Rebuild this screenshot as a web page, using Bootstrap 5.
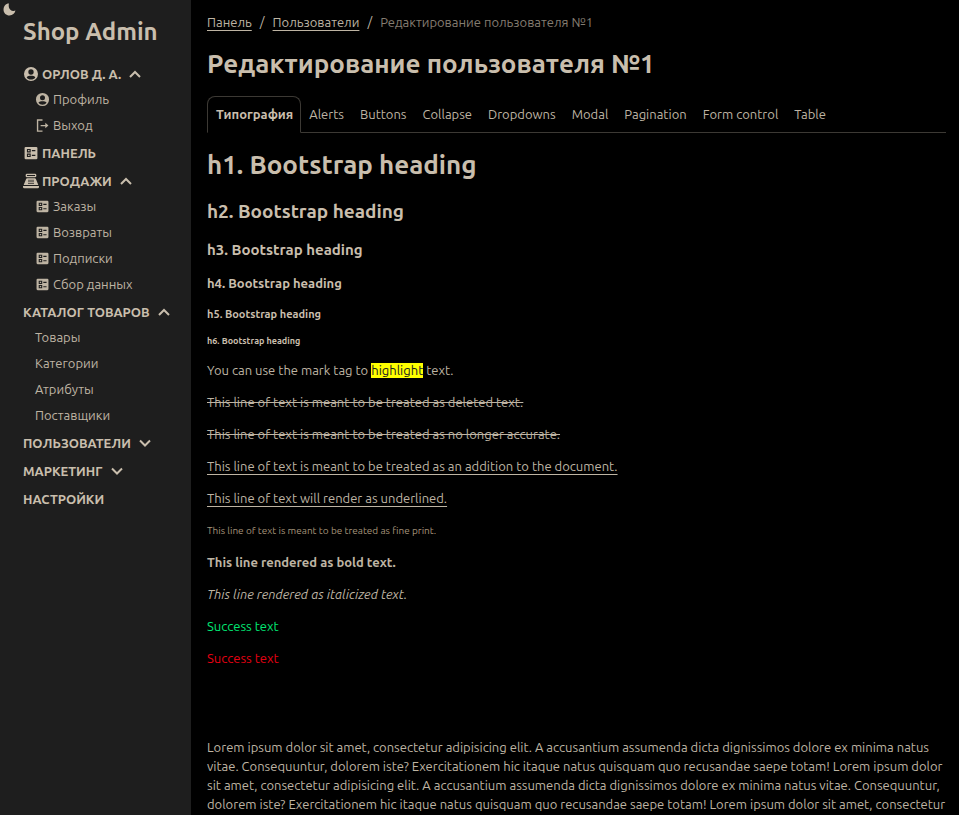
<!DOCTYPE html>
<html lang="ru">
<head>
<meta charset="utf-8">
<meta name="viewport" content="width=device-width, initial-scale=1">
<title>Shop Admin</title>
<link href="https://cdn.jsdelivr.net/npm/bootstrap@5.3.0/dist/css/bootstrap.min.css" rel="stylesheet">
<style>
:root { --ink: #c9bead; --ink-soft: #beb4a3; --line: #3c3934; }
body { font-family: Ubuntu, "Noto Sans", sans-serif; font-size: 13px; line-height: 19px; color: var(--ink-soft); background: #000; }
a, a:hover { color: inherit; }
svg { fill: currentColor; flex: none; }
h1, h2, h3, h4, h5, h6 { color: var(--ink); font-weight: 600; }
h1 { font-size: 26px; line-height: 31px; }
h2 { font-size: 19px; line-height: 23px; margin-bottom: 18px; }
h3 { font-size: 15px; line-height: 18px; margin-bottom: 16px; }
h4 { font-size: 13px; line-height: 16px; margin-bottom: 17px; }
h5 { font-size: 11px; line-height: 13px; margin-bottom: 15px; }
h6 { font-size: 9px; line-height: 10px; margin-bottom: 15px; }
p { margin-bottom: 13px; }
mark { background: #ff0; color: #222; padding: 0; line-height: 15px; display: inline-block; }
ins, u, .crumbs a { text-underline-offset: 3px; }
.page-title { margin-bottom: 17px; }
.sidebar { flex: 0 0 191px; background: #1e1e1e; padding: 16px 0 16px 23px; }
.brand { font-size: 24px; line-height: 31px; font-weight: 600; color: var(--ink); margin-bottom: 15px; }
.theme-switch { top: 3px; left: 3px; color: var(--ink); line-height: 0; }
.side-group { margin-bottom: 4px; }
.side-group.is-open { margin-bottom: 3px; }
.side-head { font-size: 13px; line-height: 24px; font-weight: 600; color: var(--ink); text-align: left; }
.side-head svg + span, .side-list svg + span { margin-left: 3px; }
.side-head .chev { margin-left: 6px; }
.side-list { padding-left: 12px; }
.side-list a { line-height: 26px; }
.main-area { padding: 13px 13px 0 16px; min-width: 0; }
.crumbs { --bs-breadcrumb-item-padding-x: 8px; --bs-breadcrumb-divider-color: var(--ink-soft); --bs-breadcrumb-item-active-color: #857d71; margin-bottom: 16px; }
.nav-tabs { --bs-nav-tabs-border-color: var(--line); --bs-nav-tabs-border-radius: 8px; --bs-nav-tabs-link-active-bg: #000; --bs-nav-tabs-link-active-color: var(--ink); --bs-nav-tabs-link-active-border-color: var(--line) var(--line) #000; --bs-nav-tabs-link-hover-border-color: transparent; --bs-nav-link-color: var(--ink-soft); --bs-nav-link-hover-color: var(--ink); --bs-nav-link-padding-x: 7px; --bs-nav-link-padding-y: 8px; margin-bottom: 16px; }
.nav-tabs .nav-link { font-size: 13px; }
.nav-tabs .nav-link.active { font-weight: 700; padding-left: 8px; }
.fine-print { font-size: 10px; color: #a5947a; }
.text-ok { color: #00e673; }
.text-bad { color: #e60012; }
.filler { padding-top: 57px; }
</style>
<script defer src="https://cdn.jsdelivr.net/npm/bootstrap@5.3.0/dist/js/bootstrap.bundle.min.js"></script>
</head>
<body>
<svg class="d-none" aria-hidden="true">
  <symbol id="i-user" viewBox="0 0 24 24"><path fill-rule="evenodd" d="M12 1.500a10.500 10.500 0 1 0 0 21 10.500 10.500 0 0 0 0-21zM12 5a4 4 0 1 1 0 8 4 4 0 0 1 0-8zM5.500 17.200C6.500 15.300 9.500 14.800 12 14.800s5.500.5 6.500 2.400C17 19.200 14.700 20.300 12 20.300s-5-1.100-6.500-3.100z"/></symbol>
  <symbol id="i-exit" viewBox="0 0 24 24"><path d="M3 2h9v2.200H5.200v15.600H12V22H3zM16.500 7.500l5 4.500-5 4.500V13H9v-2h7.500z"/></symbol>
  <symbol id="i-ballot" viewBox="0 0 24 24"><path fill-rule="evenodd" d="M13.500 9h6V7h-6zM13.500 17h6v-2h-6zM21 1.500a2 2 0 0 1 2 2v17a2 2 0 0 1-2 2H3a2 2 0 0 1-2-2v-17a2 2 0 0 1 2-2zM5 11h6.500V5H5zm0 8h6.500v-6H5zM7 6.800h2.500v2.400H7zm0 8h2.500v2.400H7z"/></symbol>
  <symbol id="i-till" viewBox="0 0 24 24"><path fill-rule="evenodd" d="M6 1h12a2 2 0 0 1 2 2v1.500a2 2 0 0 1-2 2H6a2 2 0 0 1-2-2V3a2 2 0 0 1 2-2zm0 2v1.500h12V3zM6.300 8h11.400a2 2 0 0 1 1.800 1.200L23 18H1l3.500-8.800A2 2 0 0 1 6.300 8zM8 10v1.500h2V10zm3 0v1.500h2V10zm3 0v1.500h2V10zM8 12.500V14h2v-1.500zm3 0V14h2v-1.500zm3 0V14h2v-1.500zM8 15v1.500h2V15zm3 0v1.500h2V15zm3 0v1.500h2V15zM0 19.500h24V21a2 2 0 0 1-2 2H2a2 2 0 0 1-2-2z"/></symbol>
  <symbol id="i-up" viewBox="0 0 16 16"><path d="M3 11l5-5 5 5" fill="none" stroke="currentColor" stroke-width="2"/></symbol>
  <symbol id="i-down" viewBox="0 0 16 16"><path d="M3 5.500l5 5 5-5" fill="none" stroke="currentColor" stroke-width="2"/></symbol>
  <symbol id="i-moon" viewBox="0 0 24 24"><path d="M11 1C5 1 1 6 1 12.300 1 18.500 6 23 12 23c5.500 0 10-3.500 11-9-2 1-4 1.200-6 .5-5-1.500-7.500-7-6-13.500z"/></symbol>
</svg>
<div class="d-flex min-vh-100 position-relative">
  <aside class="sidebar">
    <button type="button" class="theme-switch btn btn-link p-0 border-0 position-absolute" aria-label="Тема"><svg width="13" height="13"><use href="#i-moon"/></svg></button>
    <div class="brand">Shop Admin</div>
    <nav>
      <div class="side-group is-open">
        <button type="button" class="side-head btn p-0 border-0 d-flex align-items-center" data-bs-toggle="collapse" data-bs-target="#m-user" aria-expanded="true"><svg width="16" height="16"><use href="#i-user"/></svg><span>ОРЛОВ Д. А.</span><svg class="chev" width="16" height="16"><use href="#i-up"/></svg></button>
        <ul class="side-list list-unstyled mb-0 collapse show" id="m-user">
          <li><a class="d-flex align-items-center text-decoration-none" href="#"><svg width="15" height="15"><use href="#i-user"/></svg><span>Профиль</span></a></li>
          <li><a class="d-flex align-items-center text-decoration-none" href="#"><svg width="15" height="15"><use href="#i-exit"/></svg><span>Выход</span></a></li>
        </ul>
      </div>
      <div class="side-group">
        <a class="side-head d-flex align-items-center text-decoration-none" href="#"><svg width="16" height="14"><use href="#i-ballot"/></svg><span>ПАНЕЛЬ</span></a>
      </div>
      <div class="side-group is-open">
        <button type="button" class="side-head btn p-0 border-0 d-flex align-items-center" data-bs-toggle="collapse" data-bs-target="#m-sales" aria-expanded="true"><svg width="16" height="16"><use href="#i-till"/></svg><span>ПРОДАЖИ</span><svg class="chev" width="16" height="16"><use href="#i-up"/></svg></button>
        <ul class="side-list list-unstyled mb-0 collapse show" id="m-sales">
          <li><a class="d-flex align-items-center text-decoration-none" href="#"><svg width="15" height="13"><use href="#i-ballot"/></svg><span>Заказы</span></a></li>
          <li><a class="d-flex align-items-center text-decoration-none" href="#"><svg width="15" height="13"><use href="#i-ballot"/></svg><span>Возвраты</span></a></li>
          <li><a class="d-flex align-items-center text-decoration-none" href="#"><svg width="15" height="13"><use href="#i-ballot"/></svg><span>Подписки</span></a></li>
          <li><a class="d-flex align-items-center text-decoration-none" href="#"><svg width="15" height="13"><use href="#i-ballot"/></svg><span>Сбор данных</span></a></li>
        </ul>
      </div>
      <div class="side-group is-open">
        <button type="button" class="side-head btn p-0 border-0 d-flex align-items-center" data-bs-toggle="collapse" data-bs-target="#m-catalog" aria-expanded="true"><span>КАТАЛОГ ТОВАРОВ</span><svg class="chev" width="16" height="16"><use href="#i-up"/></svg></button>
        <ul class="side-list list-unstyled mb-0 collapse show" id="m-catalog">
          <li><a class="d-block text-decoration-none" href="#">Товары</a></li>
          <li><a class="d-block text-decoration-none" href="#">Категории</a></li>
          <li><a class="d-block text-decoration-none" href="#">Атрибуты</a></li>
          <li><a class="d-block text-decoration-none" href="#">Поставщики</a></li>
        </ul>
      </div>
      <div class="side-group">
        <button type="button" class="side-head btn p-0 border-0 d-flex align-items-center"><span>ПОЛЬЗОВАТЕЛИ</span><svg class="chev" width="16" height="16"><use href="#i-down"/></svg></button>
      </div>
      <div class="side-group">
        <button type="button" class="side-head btn p-0 border-0 d-flex align-items-center"><span>МАРКЕТИНГ</span><svg class="chev" width="16" height="16"><use href="#i-down"/></svg></button>
      </div>
      <div class="side-group">
        <a class="side-head d-block text-decoration-none" href="#">НАСТРОЙКИ</a>
      </div>
    </nav>
  </aside>
  <main class="main-area flex-grow-1">
    <nav aria-label="breadcrumb">
      <ol class="breadcrumb crumbs">
        <li class="breadcrumb-item"><a href="#">Панель</a></li>
        <li class="breadcrumb-item"><a href="#">Пользователи</a></li>
        <li class="breadcrumb-item active" aria-current="page">Редактирование пользователя №1</li>
      </ol>
    </nav>
    <h1 class="page-title">Редактирование пользователя №1</h1>
    <ul class="nav nav-tabs">
      <li class="nav-item"><a class="nav-link active" aria-current="page" href="#">Типография</a></li>
      <li class="nav-item"><a class="nav-link" href="#">Alerts</a></li>
      <li class="nav-item"><a class="nav-link" href="#">Buttons</a></li>
      <li class="nav-item"><a class="nav-link" href="#">Collapse</a></li>
      <li class="nav-item"><a class="nav-link" href="#">Dropdowns</a></li>
      <li class="nav-item"><a class="nav-link" href="#">Modal</a></li>
      <li class="nav-item"><a class="nav-link" href="#">Pagination</a></li>
      <li class="nav-item"><a class="nav-link" href="#">Form control</a></li>
      <li class="nav-item"><a class="nav-link" href="#">Table</a></li>
    </ul>
    <h1 class="mb-3 pb-1">h1. Bootstrap heading</h1>
    <h2>h2. Bootstrap heading</h2>
    <h3>h3. Bootstrap heading</h3>
    <h4>h4. Bootstrap heading</h4>
    <h5>h5. Bootstrap heading</h5>
    <h6>h6. Bootstrap heading</h6>
    <p>You can use the mark tag to <mark>highlight</mark> text.</p>
    <p><del>This line of text is meant to be treated as deleted text.</del></p>
    <p><s>This line of text is meant to be treated as no longer accurate.</s></p>
    <p><ins>This line of text is meant to be treated as an addition to the document.</ins></p>
    <p><u>This line of text will render as underlined.</u></p>
    <p class="fine-print">This line of text is meant to be treated as fine print.</p>
    <p><strong>This line rendered as bold text.</strong></p>
    <p><em>This line rendered as italicized text.</em></p>
    <p class="text-ok">Success text</p>
    <p class="text-bad">Success text</p>
    <p class="filler mb-0">Lorem ipsum dolor sit amet, consectetur adipisicing elit. A accusantium assumenda dicta dignissimos dolore ex minima natus vitae. Consequuntur, dolorem iste? Exercitationem hic itaque natus quisquam quo recusandae saepe totam! Lorem ipsum dolor sit amet, consectetur adipisicing elit. A accusantium assumenda dicta dignissimos dolore ex minima natus vitae. Consequuntur, dolorem iste? Exercitationem hic itaque natus quisquam quo recusandae saepe totam! Lorem ipsum dolor sit amet, consectetur</p>
  </main>
</div>
</body>
</html>
